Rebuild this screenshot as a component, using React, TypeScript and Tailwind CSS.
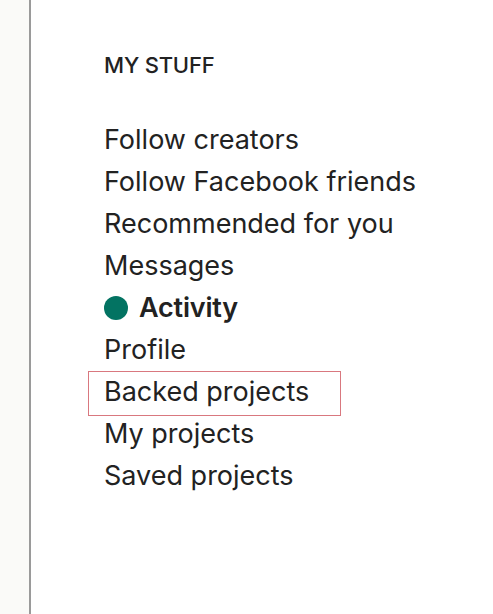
import React from "react";

const items = [
  "Follow creators",
  "Follow Facebook friends",
  "Recommended for you",
  "Messages",
  "Activity",
  "Profile",
  "Backed projects",
  "My projects",
  "Saved projects",
];

export default function App() {
  return (
    <div className="flex h-[614px] w-[493px] bg-white" style={{ fontFamily: "Inter, 'Noto Sans', sans-serif" }}>
      <div className="w-[29px] shrink-0 bg-[#fafaf8] border-r-2 border-[#9a9a9a] box-content" />
      <div className="flex flex-col pl-[73px] pt-[52px]">
        <div className="text-[22px] font-medium text-[#222] leading-[26px] tracking-[-0.2px]">MY STUFF</div>
        <ul className="mt-[41px] flex flex-col">
          {items.map((t) => {
            if (t === "Activity") {
              return (
                <li key={t} className="flex h-[42px] items-center gap-[11px] text-[27px] font-semibold text-[#222] tracking-[-0.2px]">
                  <span className="h-[24px] w-[24px] rounded-full bg-[#037362]" />
                  {t}
                </li>
              );
            }
            if (t === "Backed projects") {
              return (
                <li key={t} className="relative flex h-[42px] items-center text-[27px] text-[#222]">
                  <span className="absolute left-[-16px] top-[0px] h-[45px] w-[253px] border border-[#d9787f]" />
                  {t}
                </li>
              );
            }
            return (
              <li key={t} className="flex h-[42px] items-center text-[27px] text-[#222]">
                {t}
              </li>
            );
          })}
        </ul>
      </div>
    </div>
  );
}
